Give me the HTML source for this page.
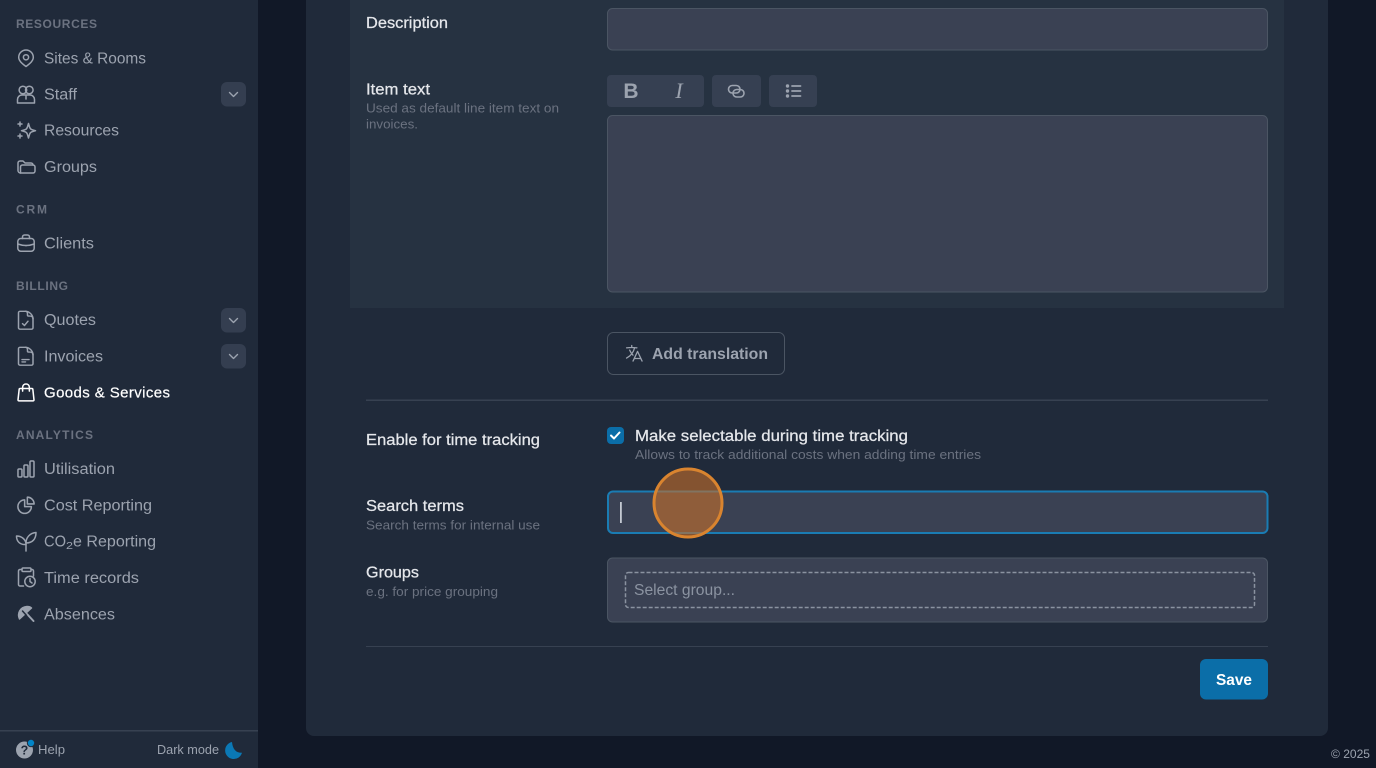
<!DOCTYPE html>
<html lang="en">
<head>
<meta charset="utf-8">
<title>Goods &amp; Services</title>
<style>
html,body{margin:0;padding:0;width:1376px;height:768px;overflow:hidden;background:#111827}
svg{display:block;position:absolute;left:0;top:0;filter:blur(.3px)}
text{font-family:"Liberation Sans",sans-serif;white-space:pre}
.nav{font-size:15.5px;fill:#9ca3af}
.hd{font-size:12px;font-weight:700;fill:#6b7280}
.lb{font-size:15.5px;fill:#e5e7eb;stroke:#e5e7eb;stroke-width:.25px}
.sub{font-size:13px;fill:#6b7280}
.ic{fill:none;stroke:#9ca3af;stroke-width:1.5;stroke-linecap:round;stroke-linejoin:round}
</style>
</head>
<body>
<svg width="1376" height="768" viewBox="0 0 1376 768" xmlns="http://www.w3.org/2000/svg">
<rect width="1376" height="768" fill="#111827"/>
<!-- sidebar -->
<rect x="0" y="0" width="258" height="768" fill="#202a3a"/>
<rect x="0" y="730" width="258" height="1.5" fill="#374151"/>
<text class="hd" x="16" y="28" textLength="81" lengthAdjust="spacing">RESOURCES</text>
<text class="hd" x="16" y="213.500" textLength="31" lengthAdjust="spacing">CRM</text>
<text class="hd" x="16" y="290" textLength="52" lengthAdjust="spacing">BILLING</text>
<text class="hd" x="16" y="439" textLength="77" lengthAdjust="spacing">ANALYTICS</text>

<text class="nav" x="44" y="63.500" textLength="102" lengthAdjust="spacingAndGlyphs">Sites &amp; Rooms</text>
<text class="nav" x="44" y="99.500" textLength="33" lengthAdjust="spacingAndGlyphs">Staff</text>
<text class="nav" x="44" y="135.500" textLength="75" lengthAdjust="spacingAndGlyphs">Resources</text>
<text class="nav" x="44" y="172" textLength="53" lengthAdjust="spacingAndGlyphs">Groups</text>
<text class="nav" x="44" y="248.500" textLength="50" lengthAdjust="spacingAndGlyphs">Clients</text>
<text class="nav" x="44" y="325" textLength="52" lengthAdjust="spacingAndGlyphs">Quotes</text>
<text class="nav" x="44" y="361.500" textLength="59" lengthAdjust="spacingAndGlyphs">Invoices</text>
<text class="nav" x="44" y="397.500" textLength="126" lengthAdjust="spacing" style="fill:#fff;stroke:#fff;stroke-width:.2px;font-size:15px">Goods &amp; Services</text>
<text class="nav" x="44" y="474" textLength="71" lengthAdjust="spacingAndGlyphs">Utilisation</text>
<text class="nav" x="44" y="510.500" textLength="108" lengthAdjust="spacingAndGlyphs">Cost Reporting</text>
<text class="nav" x="44" y="546.500" textLength="22" lengthAdjust="spacingAndGlyphs">CO</text>
<text class="nav" x="66" y="549" textLength="7" lengthAdjust="spacingAndGlyphs" style="font-size:10.5px">2</text>
<text class="nav" x="73" y="546.500" textLength="83" lengthAdjust="spacingAndGlyphs">e Reporting</text>
<text class="nav" x="44" y="583" textLength="95" lengthAdjust="spacingAndGlyphs">Time records</text>
<text class="nav" x="44" y="619.500" textLength="71" lengthAdjust="spacingAndGlyphs">Absences</text>

<!-- sidebar icons -->
<g class="ic"><path d="M26 66.500C22 63.500 18.700 60.800 18.700 57.300a7.300 7.300 0 0 1 14.600 0C33.300 60.800 30 63.500 26 66.500z"/><circle cx="26" cy="57.300" r="2.600"/></g>
<g class="ic" transform="translate(14,82)"><circle cx="8.900" cy="8" r="3.800"/><circle cx="15.300" cy="8" r="3.800"/><path d="M3.500 21v-3.500a4.500 4.500 0 0 1 4.500-4.500h8a4.500 4.500 0 0 1 4.500 4.500V21z"/><path d="M12 13.500V17"/></g>
<g class="ic" transform="translate(14,118)"><path d="M14.500 5.500l1.100 3.600a4 4 0 0 0 2.800 2.700l3.100.9-3.100.9a4 4 0 0 0-2.800 2.700l-1.100 3.700-1.100-3.700a4 4 0 0 0-2.800-2.700l-3.100-.9 3.100-.9a4 4 0 0 0 2.800-2.700z"/><path d="M6 4v4M4 6h4M6 16v4M4 18h4"/></g>
<g class="ic" transform="translate(14,154)"><path d="M6.500 19h12.500a2 2 0 0 0 2-2v-4a2 2 0 0 0-2-2H8.500a2 2 0 0 0-2 2z"/><path d="M6.500 19A2.500 2.500 0 0 1 4 16.500V9a2 2 0 0 1 2-2h3l2 2h6a2 2 0 0 1 2 2"/></g>
<g class="ic" transform="translate(14,231)"><rect x="3.800" y="7.500" width="16.400" height="12.700" rx="3"/><path d="M8.500 7.500V6a2 2 0 0 1 2-2h3a2 2 0 0 1 2 2v1.500"/><path d="M3.800 13c5.500 2 11 2 16.400 0"/><path d="M12 14.500v.1"/></g>
<g class="ic" transform="translate(14,309) scale(1,.94)"><path d="M6 2.500h5.500c4 0 7.500 4 7.500 8v9.500a1.500 1.500 0 0 1-1.500 1.500H6A1.500 1.500 0 0 1 4.500 20V4A1.500 1.500 0 0 1 6 2.500z"/><path d="M11.500 2.500c1.500 0 2 1 2 2.500v1.500a1 1 0 0 0 1 1h1.500c1.500 0 3 1 3 3"/><path d="M8.500 15.500l2 2 3.500-4.500"/></g>
<g class="ic" transform="translate(14,345) scale(1,.94)"><path d="M6 2.500h5.500c4 0 7.500 4 7.500 8v9.500a1.500 1.500 0 0 1-1.500 1.500H6A1.500 1.500 0 0 1 4.500 20V4A1.500 1.500 0 0 1 6 2.500z"/><path d="M11.500 2.500c1.500 0 2 1 2 2.500v1.500a1 1 0 0 0 1 1h1.500c1.500 0 3 1 3 3"/><path d="M8 15.500h7M8 18h3.500"/></g>
<g class="ic" transform="translate(15.200,382) scale(.9,.87)" style="stroke:#fff;stroke-width:1.7"><path d="M15.750 10.500V6a3.750 3.750 0 1 0-7.500 0v4.500m11.356-1.993l1.263 12c.07.665-.45 1.243-1.119 1.243H4.250a1.125 1.125 0 0 1-1.120-1.243l1.264-12A1.125 1.125 0 0 1 5.513 7.500h12.974c.576 0 1.059.435 1.119 1.007z"/></g>
<g class="ic" transform="translate(15.300,458.300) scale(.89)" style="stroke-width:1.700"><path d="M3 13.125C3 12.504 3.504 12 4.125 12h2.250c.621 0 1.125.504 1.125 1.125v6.750C7.500 20.496 6.996 21 6.375 21h-2.250A1.125 1.125 0 0 1 3 19.875v-6.750zM9.750 8.625c0-.621.504-1.125 1.125-1.125h2.250c.621 0 1.125.504 1.125 1.125v11.250c0 .621-.504 1.125-1.125 1.125h-2.250a1.125 1.125 0 0 1-1.125-1.125V8.625zM16.500 4.125c0-.621.504-1.125 1.125-1.125h2.250C20.496 3 21 3.504 21 4.125v15.750c0 .621-.504 1.125-1.125 1.125h-2.250a1.125 1.125 0 0 1-1.125-1.125V4.125z"/></g>
<g class="ic" transform="translate(15.200,494.500) scale(.9)" style="stroke-width:1.700"><path d="M10.500 6a7.500 7.500 0 1 0 7.500 7.500h-7.500V6z"/><path d="M13.500 10.500H21A7.500 7.500 0 0 0 13.500 3v7.500z"/></g>
<g class="ic" transform="translate(14,529)"><path d="M12 22v-8"/><path d="M12 14c0-5 3.500-10 10-10.500C22 10 18.500 14 12 14z"/><path d="M12 15.500C6 16 2.500 12.500 2.500 7c5 0 8.500 3 9.500 7"/></g>
<g class="ic" transform="translate(14,565)"><path d="M9.500 21H6a1.500 1.500 0 0 1-1.500-1.500V6A1.500 1.500 0 0 1 6 4.500h2M17 4.500h1A1.500 1.500 0 0 1 19.500 6v5"/><rect x="8" y="3" width="9" height="3.500" rx="1"/><circle cx="16" cy="16.500" r="5.200"/><path d="M16 13.500v3l2 1.500"/></g>
<g class="ic" transform="translate(14,602)"><path d="M5.500 17C3 11.500 6 5 13 4.500c2 0 3.500.5 4.500 1.500z" fill="#9ca3af"/><path d="M13 12l6.500 7" stroke-width="2"/><path d="M8.500 9l4 4.500" stroke="#202a3a"/></g>

<!-- chevron buttons -->
<g>
<rect x="221" y="82" width="25" height="24.500" rx="6" fill="#343e50"/>
<rect x="221" y="308" width="25" height="24.500" rx="6" fill="#343e50"/>
<rect x="221" y="344" width="25" height="24.500" rx="6" fill="#343e50"/>
<g fill="none" stroke="#9ca3af" stroke-width="1.400" stroke-linecap="round" stroke-linejoin="round">
<path d="M229.500 92.500l4 4 4-4"/>
<path d="M229.500 318.500l4 4 4-4"/>
<path d="M229.500 354.500l4 4 4-4"/>
</g>
</g>

<!-- sidebar footer -->
<circle cx="24.500" cy="750" r="8.500" fill="#9ca3af"/>
<text x="24.500" y="754.500" text-anchor="middle" style="font-size:12.500px;font-weight:700;fill:#202a3a">?</text>
<circle cx="31" cy="743" r="4.200" fill="#202a3a"/>
<circle cx="31" cy="743" r="3.200" fill="#0284c7"/>
<text x="38" y="754" textLength="27" lengthAdjust="spacingAndGlyphs" style="font-size:13px;fill:#9ca3af">Help</text>
<text x="157" y="754" textLength="62" lengthAdjust="spacingAndGlyphs" style="font-size:13px;fill:#9ca3af">Dark mode</text>
<path d="M232 742a8.600 8.600 0 1 0 10 10.800Q233 753 232 742z" fill="#0b78b5"/>

<!-- main card -->
<path d="M306 0H1328V728a8 8 0 0 1-8 8H314a8 8 0 0 1-8-8z" fill="#202a3a"/>
<rect x="350" y="0" width="934" height="308" fill="#263241"/>

<!-- description -->
<text class="lb" x="366" y="28" textLength="82" lengthAdjust="spacingAndGlyphs">Description</text>
<rect x="607.500" y="8.500" width="660" height="41.500" rx="5" fill="#3a4153" stroke="#4b5563"/>

<!-- item text -->
<text class="lb" x="366" y="94.500" textLength="64" lengthAdjust="spacingAndGlyphs">Item text</text>
<text class="sub" x="366" y="112.500" textLength="193" lengthAdjust="spacingAndGlyphs">Used as default line item text on</text>
<text class="sub" x="366" y="128.500" textLength="52" lengthAdjust="spacingAndGlyphs">invoices.</text>
<rect x="607" y="75" width="97" height="32" rx="4" fill="#364052"/>
<rect x="712" y="75" width="49" height="32" rx="4" fill="#364052"/>
<rect x="769" y="75" width="48" height="32" rx="4" fill="#364052"/>
<text x="631" y="98" text-anchor="middle" style="font-size:21px;font-weight:700;fill:#9ca3af">B</text>
<text x="679" y="98" text-anchor="middle" style="font-family:'Liberation Serif',serif;font-size:22px;font-style:italic;fill:#9ca3af">I</text>
<g fill="none" stroke="#9ca3af" stroke-width="1.600" stroke-linecap="round">
<rect x="728.500" y="85.500" width="11.500" height="7.500" rx="3.700"/>
<rect x="733" y="89.500" width="11" height="7.500" rx="3.700"/>
<path d="M792 86h8.500M792 91h8.500M792 96h8.500" stroke-width="1.800"/>
</g>
<circle cx="787.500" cy="86" r="1.700" fill="#9ca3af"/><circle cx="787.500" cy="91" r="1.700" fill="#9ca3af"/><circle cx="787.500" cy="96" r="1.700" fill="#9ca3af"/>
<rect x="607.500" y="115.500" width="660" height="176.500" rx="5" fill="#3a4153" stroke="#4b5563"/>

<!-- add translation -->
<rect x="607.500" y="332.500" width="177" height="42" rx="6" fill="none" stroke="#4b5563"/>
<g class="ic" transform="translate(624,343) scale(.86)"><path d="M10.500 21l5.250-11.250L21 21m-9-3h7.500M3 5.621a48.474 48.474 0 0 1 6-.371m0 0c1.120 0 2.233.038 3.334.114M9 5.250V3m3.334 2.364C11.176 10.658 7.690 15.080 3 17.502m9.334-12.138c.896.061 1.785.147 2.666.257m-4.589 8.495a18.023 18.023 0 0 1-3.827-5.802"/></g>
<text x="652" y="359" textLength="116" lengthAdjust="spacingAndGlyphs" style="font-size:15.500px;font-weight:700;fill:#9ca3af">Add translation</text>

<rect x="366" y="399.500" width="902" height="1.500" fill="#374151"/>

<!-- time tracking -->
<text class="lb" x="366" y="445" textLength="174" lengthAdjust="spacingAndGlyphs">Enable for time tracking</text>
<rect x="607" y="427" width="17" height="17" rx="4" fill="#0b6ea8"/>
<path d="M611 435.500l3 3 5.500-6" fill="none" stroke="#fff" stroke-width="2" stroke-linecap="round" stroke-linejoin="round"/>
<text class="lb" x="635" y="441" textLength="273" lengthAdjust="spacingAndGlyphs">Make selectable during time tracking</text>
<text class="sub" x="635" y="459" textLength="346" lengthAdjust="spacingAndGlyphs">Allows to track additional costs when adding time entries</text>

<!-- search terms -->
<text class="lb" x="366" y="511" textLength="98" lengthAdjust="spacingAndGlyphs">Search terms</text>
<text class="sub" x="366" y="529.500" textLength="174" lengthAdjust="spacingAndGlyphs">Search terms for internal use</text>
<rect x="608" y="491.500" width="659.500" height="41.500" rx="5" fill="#3a4153" stroke="#1a7cb3" stroke-width="2"/>
<rect x="620" y="502" width="1.800" height="21" fill="#c4c9d2"/>

<!-- groups -->
<text class="lb" x="366" y="577.500" textLength="53" lengthAdjust="spacingAndGlyphs">Groups</text>
<text class="sub" x="366" y="596" textLength="132" lengthAdjust="spacingAndGlyphs">e.g. for price grouping</text>
<rect x="607.500" y="558" width="660" height="64" rx="5" fill="#3a4153" stroke="#4b5563"/>
<rect x="625.500" y="572.500" width="629" height="35" rx="3" fill="none" stroke="#8a92a0" stroke-width="1.500" stroke-dasharray="4 2"/>
<text x="634" y="595" textLength="101" lengthAdjust="spacingAndGlyphs" style="font-size:15.500px;fill:#8b93a1">Select group...</text>

<rect x="366" y="646" width="902" height="1" fill="#374151"/>

<!-- save -->
<rect x="1200" y="659" width="68" height="40.500" rx="6" fill="#0b6ea8"/>
<text x="1216" y="685" textLength="36" lengthAdjust="spacingAndGlyphs" style="font-size:15.500px;font-weight:700;fill:#fff">Save</text>

<text x="1331" y="758" textLength="39" lengthAdjust="spacingAndGlyphs" style="font-size:12px;fill:#9ca3af">© 2025</text>

<!-- click highlight -->
<circle cx="688" cy="503" r="34" fill="#c8702a" fill-opacity=".6" stroke="#d9842f" stroke-width="3"/>
</svg>
</body>
</html>
